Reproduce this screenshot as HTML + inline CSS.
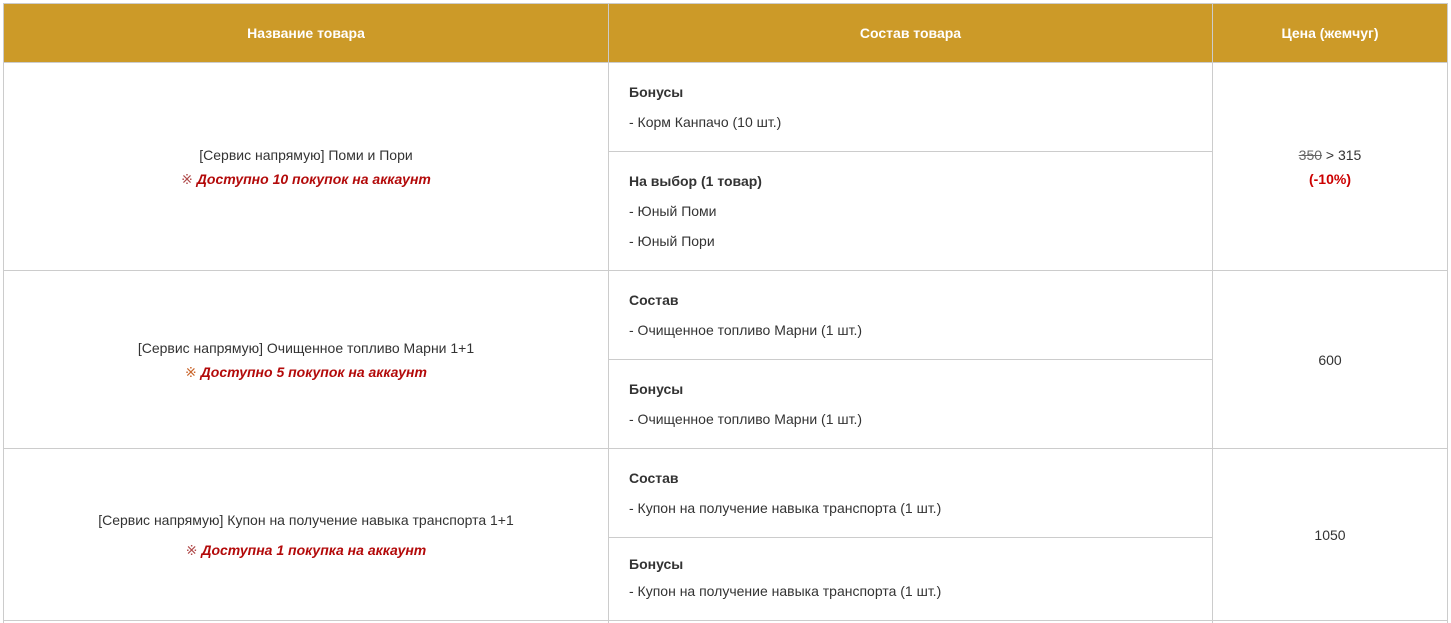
<!DOCTYPE html>
<html><head><meta charset="utf-8"><style>
*{margin:0;padding:0;box-sizing:border-box}
body{width:1451px;height:623px;background:#fff;position:relative;overflow:hidden;font-family:"Liberation Sans",Arial,sans-serif;font-size:14px;color:#333}
.h{position:absolute;height:1px;background:#ccc}
.v{position:absolute;width:1px;background:#ccc}
.t{position:absolute;line-height:16px;white-space:nowrap}
.c{text-align:center}
.b{font-weight:bold}
.r{color:#b30a0a;font-weight:bold;font-style:italic}
.m{color:#c8642a;font-style:normal;font-weight:normal}
.hd{color:#fff;font-weight:bold}
</style></head><body>
<div style="position:absolute;left:4px;top:4px;width:1443px;height:58px;background:#cc9a28"></div>
<div class="h" style="left:3px;top:3px;width:1445px"></div>
<div class="h" style="left:3px;top:62px;width:1445px"></div>
<div class="h" style="left:3px;top:270px;width:1445px"></div>
<div class="h" style="left:3px;top:448px;width:1445px"></div>
<div class="h" style="left:3px;top:620px;width:1445px"></div>
<div class="h" style="left:608px;top:151px;width:604px"></div>
<div class="h" style="left:608px;top:359px;width:604px"></div>
<div class="h" style="left:608px;top:537px;width:604px"></div>
<div class="v" style="left:3px;top:3px;height:620px"></div>
<div class="v" style="left:608px;top:3px;height:620px"></div>
<div class="v" style="left:1212px;top:3px;height:620px"></div>
<div class="v" style="left:1447px;top:3px;height:620px"></div>

<div class="t c hd" style="left:4px;width:604px;top:25px">Название товара</div>
<div class="t c hd" style="left:609px;width:603px;top:25px">Состав товара</div>
<div class="t c hd" style="left:1213px;width:234px;top:25px">Цена (жемчуг)</div>

<div class="t c" style="left:4px;width:604px;top:147px">[Сервис напрямую] Поми и Пори</div>
<div class="t c r" style="left:4px;width:604px;top:171px"><span class="m" style="color:#b04a4a">※</span> Доступно 10 покупок на аккаунт</div>
<div class="t b" style="left:629px;top:84px">Бонусы</div>
<div class="t" style="left:629px;top:114px">- Корм Канпачо (10 шт.)</div>
<div class="t b" style="left:629px;top:173px">На выбор (1 товар)</div>
<div class="t" style="left:629px;top:203px">- Юный Поми</div>
<div class="t" style="left:629px;top:233px">- Юный Пори</div>
<div class="t c" style="left:1213px;width:234px;top:147px"><s style="color:#666">350</s> &gt; 315</div>
<div class="t c b" style="left:1213px;width:234px;top:171px;color:#c00">(-10%)</div>

<div class="t c" style="left:4px;width:604px;top:340px">[Сервис напрямую] Очищенное топливо Марни 1+1</div>
<div class="t c r" style="left:4px;width:604px;top:364px"><span class="m">※</span> Доступно 5 покупок на аккаунт</div>
<div class="t b" style="left:629px;top:292px">Состав</div>
<div class="t" style="left:629px;top:322px">- Очищенное топливо Марни (1 шт.)</div>
<div class="t b" style="left:629px;top:381px">Бонусы</div>
<div class="t" style="left:629px;top:411px">- Очищенное топливо Марни (1 шт.)</div>
<div class="t c" style="left:1213px;width:234px;top:352px">600</div>

<div class="t c" style="left:4px;width:604px;top:512px">[Сервис напрямую] Купон на получение навыка транспорта 1+1</div>
<div class="t c r" style="left:4px;width:604px;top:542px"><span class="m" style="color:#b04a4a">※</span> Доступна 1 покупка на аккаунт</div>
<div class="t b" style="left:629px;top:470px">Состав</div>
<div class="t" style="left:629px;top:500px">- Купон на получение навыка транспорта (1 шт.)</div>
<div class="t b" style="left:629px;top:556px">Бонусы</div>
<div class="t" style="left:629px;top:583px">- Купон на получение навыка транспорта (1 шт.)</div>
<div class="t c" style="left:1213px;width:234px;top:527px">1050</div>
</body></html>
